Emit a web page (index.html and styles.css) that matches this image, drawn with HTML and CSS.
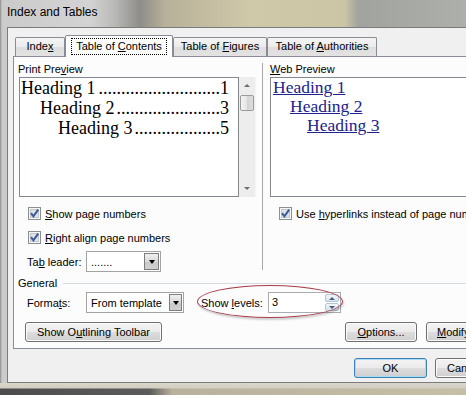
FILE: index.html
```html
<!DOCTYPE html>
<html>
<head>
<meta charset="utf-8">
<title>Index and Tables</title>
<link rel="stylesheet" href="styles.css">
</head>
<body>
<div class="window">
  <div class="titlebar">Index and Tables</div>
  <div class="client">
    <div class="tabs">
      <div class="tab tab-index">Inde<u>x</u></div>
      <div class="tab tab-active"><span class="focus">Table of <u>C</u>ontents</span></div>
      <div class="tab tab-figures">Table of <u>F</u>igures</div>
      <div class="tab tab-auth">Table of <u>A</u>uthorities</div>
    </div>
    <div class="panel">
      <div class="columns">
        <div class="col col-left">
          <div class="group-label shift">Print Pre<u>v</u>iew</div>
          <div class="preview-row">
            <div class="print-box">
              <div class="toc-line"><span class="toc-text">Heading 1</span><span class="leader"><span class="dots">...........................</span></span><span class="toc-num">1</span></div>
              <div class="toc-line lvl2"><span class="toc-text">Heading 2</span><span class="leader"><span class="dots">.......................</span></span><span class="toc-num">3</span></div>
              <div class="toc-line lvl3"><span class="toc-text">Heading 3</span><span class="leader"><span class="dots">...................</span></span><span class="toc-num">5</span></div>
            </div>
            <div class="scrollbar">
              <span class="sb-up"></span>
              <span class="sb-thumb"></span>
              <span class="sb-down"></span>
            </div>
          </div>
          <div class="check">
            <svg class="cb" width="13" height="13" viewBox="0 0 13 13"><rect x="0.5" y="0.5" width="12" height="12" fill="#f6f6f6" stroke="#8e8f8f"/><rect x="2.5" y="2.5" width="8" height="8" fill="#dfe3e8" stroke="#c3c8ce"/><path d="M3 6.2 L5.4 9.4 L10.2 2.6" fill="none" stroke="#3e5a97" stroke-width="2"/></svg>
            <span><u>S</u>how page numbers</span>
          </div>
          <div class="check">
            <svg class="cb" width="13" height="13" viewBox="0 0 13 13"><rect x="0.5" y="0.5" width="12" height="12" fill="#f6f6f6" stroke="#8e8f8f"/><rect x="2.5" y="2.5" width="8" height="8" fill="#dfe3e8" stroke="#c3c8ce"/><path d="M3 6.2 L5.4 9.4 L10.2 2.6" fill="none" stroke="#3e5a97" stroke-width="2"/></svg>
            <span><u>R</u>ight align page numbers</span>
          </div>
          <div class="leader-row">
            <span class="field-label">Ta<u>b</u> leader:</span>
            <div class="select select-leader">
              <span class="select-text">.......</span>
              <span class="dd-btn"><span class="tri"></span></span>
            </div>
          </div>
        </div>
        <div class="vsep"></div>
        <div class="col col-right">
          <div class="group-label"><u>W</u>eb Preview</div>
          <div class="web-box">
            <div class="web-link">Heading 1</div>
            <div class="web-link lvl2">Heading 2</div>
            <div class="web-link lvl3">Heading 3</div>
          </div>
          <div class="check">
            <svg class="cb" width="13" height="13" viewBox="0 0 13 13"><rect x="0.5" y="0.5" width="12" height="12" fill="#f6f6f6" stroke="#8e8f8f"/><rect x="2.5" y="2.5" width="8" height="8" fill="#dfe3e8" stroke="#c3c8ce"/><path d="M3 6.2 L5.4 9.4 L10.2 2.6" fill="none" stroke="#3e5a97" stroke-width="2"/></svg>
            <span>Use <u>h</u>yperlinks instead of page numbers</span>
          </div>
        </div>
      </div>
      <div class="general">General</div>
      <div class="formats-row">
        <span class="field-label">Forma<u>t</u>s:</span>
        <div class="select select-formats">
          <span class="select-text">From template</span>
          <span class="dd-btn"><span class="tri"></span></span>
        </div>
        <span class="levels-label">Show <u>l</u>evels:</span>
        <div class="spin">
          <span class="spin-text">3</span>
          <span class="spin-btns">
            <span class="spin-btn"><span class="tri-up"></span></span>
            <span class="spin-btn"><span class="tri-down"></span></span>
          </span>
        </div>
      </div>
      <div class="buttons-row">
        <div class="btn btn-outline">Show O<u>u</u>tlining Toolbar</div>
        <div class="btn btn-options"><u>O</u>ptions...</div>
        <div class="btn btn-modify"><u>M</u>odify...</div>
      </div>
    </div>
    <div class="dialog-buttons">
      <div class="btn btn-default">OK</div>
      <div class="btn btn-cancel">Cancel</div>
    </div>
  </div>
  <div class="bottom-frame"></div>
  <div class="annotation"></div>
</div>
</body>
</html>
```

FILE: styles.css
```css
* { box-sizing: border-box; }
html, body { margin: 0; padding: 0; }
body {
  width: 466px;
  height: 395px;
  overflow: hidden;
  font-family: "Liberation Sans", Arial, sans-serif;
  font-size: 11px;
  color: #000;
}
u { text-decoration-thickness: 1px; text-underline-offset: 1px; }

.window {
  width: 466px;
  height: 395px;
  display: flex;
  flex-direction: column;
  overflow: hidden;
  position: relative;
  background: linear-gradient(to right, #8c8c8c 0, #cbcbcb 2px, #d3d3d3 90px, #b8b8b6 115px, #8e8d89 140px, #b7b19a 165px, #cfc8a9 250px, #cbc4a5 345px, #a1a49e 358px, #adb0aa 466px);
}

.titlebar {
  flex: none;
  height: 27px;
  padding-left: 7px;
  line-height: 25px;
  font-size: 12px;
  white-space: nowrap;
}

.client {
  flex: none;
  height: 356px;
  margin-left: 7px;
  border: 1px solid #7b7b7b;
  border-right: none;
  background: #f0f0f0;
}

/* Tabs */
.tabs {
  display: flex;
  align-items: flex-end;
  height: 28px;
  padding: 7px 0 0 7px;
}
.tab {
  flex: none;
  height: 19px;
  border: 1px solid #898c95;
  border-bottom: none;
  border-radius: 2px 2px 0 0;
  background: linear-gradient(#f5f5f5, #ebebeb 50%, #dedede 52%, #e2e2e2);
  text-align: center;
  line-height: 17px;
  white-space: nowrap;
}
.tab-index { width: 50px; }
.tab-active {
  width: 108px;
  height: 22px;
  margin-bottom: -1px;
  padding-top: 2px;
  background: #fcfcfc;
  position: relative;
  z-index: 1;
}
.focus {
  display: inline-block;
  border: 1px dotted #000;
  padding: 0 4px;
  line-height: 15px;
}
.tab-figures { width: 94px; }
.tab-auth { width: 110px; }

/* Panel */
.panel {
  width: 480px;
  height: 293px;
  margin-left: 5px;
  border: 1px solid #898c95;
  background: #fcfcfc;
}
.columns { display: flex; }
.col-left { flex: none; padding-left: 5px; width: 242px; }
.group-label {
  margin-top: 5px;
  height: 14px;
  line-height: 14px;
  white-space: nowrap;
}
.group-label.shift { margin-left: -1px; }

.preview-row {
  display: flex;
  height: 120px;
  margin-top: 1px;
}
.print-box {
  width: 220px;
  height: 120px;
  border: 1px solid #828790;
  background: #fff;
  padding: 0 9px 0 1px;
  font-family: "Liberation Serif", "Times New Roman", serif;
  font-size: 18px;
  line-height: 20px;
}
.toc-line {
  display: flex;
  white-space: nowrap;
}
.toc-line.lvl2 { padding-left: 19px; }
.toc-line.lvl3 { padding-left: 37px; }
.toc-text, .toc-num { flex: none; }
.leader {
  flex: 1;
  min-width: 0;
  display: flex;
  justify-content: flex-end;
  overflow: hidden;
  margin-left: 2px;
}
.dots { flex: none; }

.scrollbar {
  width: 17px;
  height: 120px;
  background: #ededed;
  border-right: 1px solid #f6f6f6;
  display: flex;
  flex-direction: column;
  align-items: center;
  padding: 7px 0 7px 0;
}
.sb-up, .sb-down {
  width: 0;
  height: 0;
  border-left: 3px solid transparent;
  border-right: 3px solid transparent;
}
.sb-up { border-bottom: 3px solid #6d6d6d; }
.sb-down { border-top: 3px solid #6d6d6d; margin-top: auto; }
.sb-thumb {
  width: 14px;
  height: 16px;
  margin-top: 8px;
  border: 1px solid #9b9b9b;
  border-radius: 2px;
  background: linear-gradient(to right, #f4f4f4, #e4e4e4 50%, #d4d4d4 51%, #dcdcdc);
}

.check {
  display: flex;
  align-items: center;
  gap: 4px;
  height: 13px;
  margin-top: 10px;
  padding-left: 9px;
  white-space: nowrap;
}
.check + .check { margin-top: 11px; }
.cb { flex: none; display: block; }

.leader-row {
  display: flex;
  align-items: center;
  margin-top: 7px;
  padding-left: 8px;
}
.field-label {
  flex: none;
  width: 59px;
  white-space: nowrap;
}
.select {
  flex: none;
  display: flex;
  align-items: center;
  height: 21px;
  border: 1px solid #a3a3a3;
  background: #fff;
  padding: 1px;
}
.select-leader { width: 75px; }
.select-formats { width: 98px; }
.select-text {
  flex: 1;
  padding-left: 3px;
  white-space: nowrap;
  overflow: hidden;
}
.dd-btn {
  flex: none;
  width: 15px;
  height: 17px;
  border: 1px solid #7d7d7d;
  background: linear-gradient(#f0f0f0, #d9d9d9 50%, #c9c9c9 51%, #cfcfcf);
  display: flex;
  align-items: center;
  justify-content: center;
}
.select-formats .dd-btn { width: 13px; }
.tri {
  width: 0;
  height: 0;
  border-left: 3.5px solid transparent;
  border-right: 3.5px solid transparent;
  border-top: 4px solid #000;
}

.vsep {
  flex: none;
  width: 1px;
  height: 207px;
  margin: 6px 7px 0 6px;
  background: #a8a8a8;
}
.col-right { flex: none; width: 220px; }
.web-box {
  width: 220px;
  height: 120px;
  margin-top: 1px;
  border: 1px solid #828790;
  background: #fff;
  padding-left: 2px;
  font-family: "Liberation Serif", "Times New Roman", serif;
  font-size: 17.5px;
  line-height: 19px;
  color: #22228c;
}
.web-link { text-decoration: underline; text-decoration-thickness: 1px; white-space: nowrap; }
.web-link.lvl2 { padding-left: 17px; }
.web-link.lvl3 { padding-left: 34px; }

.general {
  display: flex;
  align-items: center;
  margin-top: 4px;
  padding-left: 4px;
  height: 14px;
  line-height: 14px;
}
.general::after {
  content: "";
  flex: 1;
  height: 1px;
  margin-left: 6px;
  background: #d8dcdf;
}

.formats-row {
  display: flex;
  align-items: center;
  margin-top: 2px;
  padding-left: 13px;
}
.levels-label {
  flex: none;
  width: 67px;
  margin-left: 17px;
  white-space: nowrap;
}
.spin {
  flex: none;
  display: flex;
  width: 73px;
  height: 21px;
  border: 1px solid #abadb3;
  background: #fff;
}
.spin-text { padding-left: 3px; line-height: 19px; }
.spin-btns {
  margin-left: auto;
  width: 15px;
  display: flex;
  flex-direction: column;
  gap: 1px;
  padding: 1px 1px 1px 0;
}
.spin-btn {
  flex: 1;
  border: 1px solid #b6c3d1;
  border-radius: 2px;
  background: linear-gradient(#f2f6fa, #d9e4ee);
  display: flex;
  align-items: center;
  justify-content: center;
}
.tri-up, .tri-down {
  width: 0;
  height: 0;
  border-left: 3px solid transparent;
  border-right: 3px solid transparent;
}
.tri-up { border-bottom: 3px solid #4a5f80; }
.tri-down { border-top: 3px solid #4a5f80; }

.buttons-row {
  display: flex;
  margin-top: 9px;
  padding-left: 11px;
}
.btn {
  flex: none;
  height: 20px;
  border: 1px solid #707070;
  border-radius: 3px;
  background: linear-gradient(#f3f3f3 0, #ebebeb 50%, #dddddd 51%, #cfcfcf 100%);
  box-shadow: inset 0 0 0 1px #fbfbfb;
  text-align: center;
  line-height: 18px;
  white-space: nowrap;
}
.btn-outline { width: 137px; }
.btn-options { width: 72px; margin-left: 183px; }
.btn-modify { width: 72px; margin-left: 9px; text-align: left; padding-left: 10px; }

.dialog-buttons {
  display: flex;
  margin-top: 9px;
  padding-left: 346px;
}
.btn-default {
  width: 73px;
  border-color: #3c7fb1;
  box-shadow: inset 0 0 0 1px #a6dcf6;
}
.btn-cancel { width: 73px; margin-left: 8px; text-align: left; padding-left: 11px; }

.bottom-frame {
  flex: 1;
  background:
    linear-gradient(to bottom, #dad6cb 0, #d2cec2 5px, rgba(0,0,0,0) 6px),
    linear-gradient(to right, #4c4c4c 0, #5c5c5c 150px, #b9b19c 172px, #c6bea6 466px);
}

.annotation {
  position: absolute;
  left: 197px;
  top: 285px;
  width: 146px;
  height: 33px;
  border: 1.5px solid #a63e4b;
  border-radius: 50%;
  box-shadow: 1px 2px 2px rgba(0, 0, 0, 0.18);
  pointer-events: none;
}
```
